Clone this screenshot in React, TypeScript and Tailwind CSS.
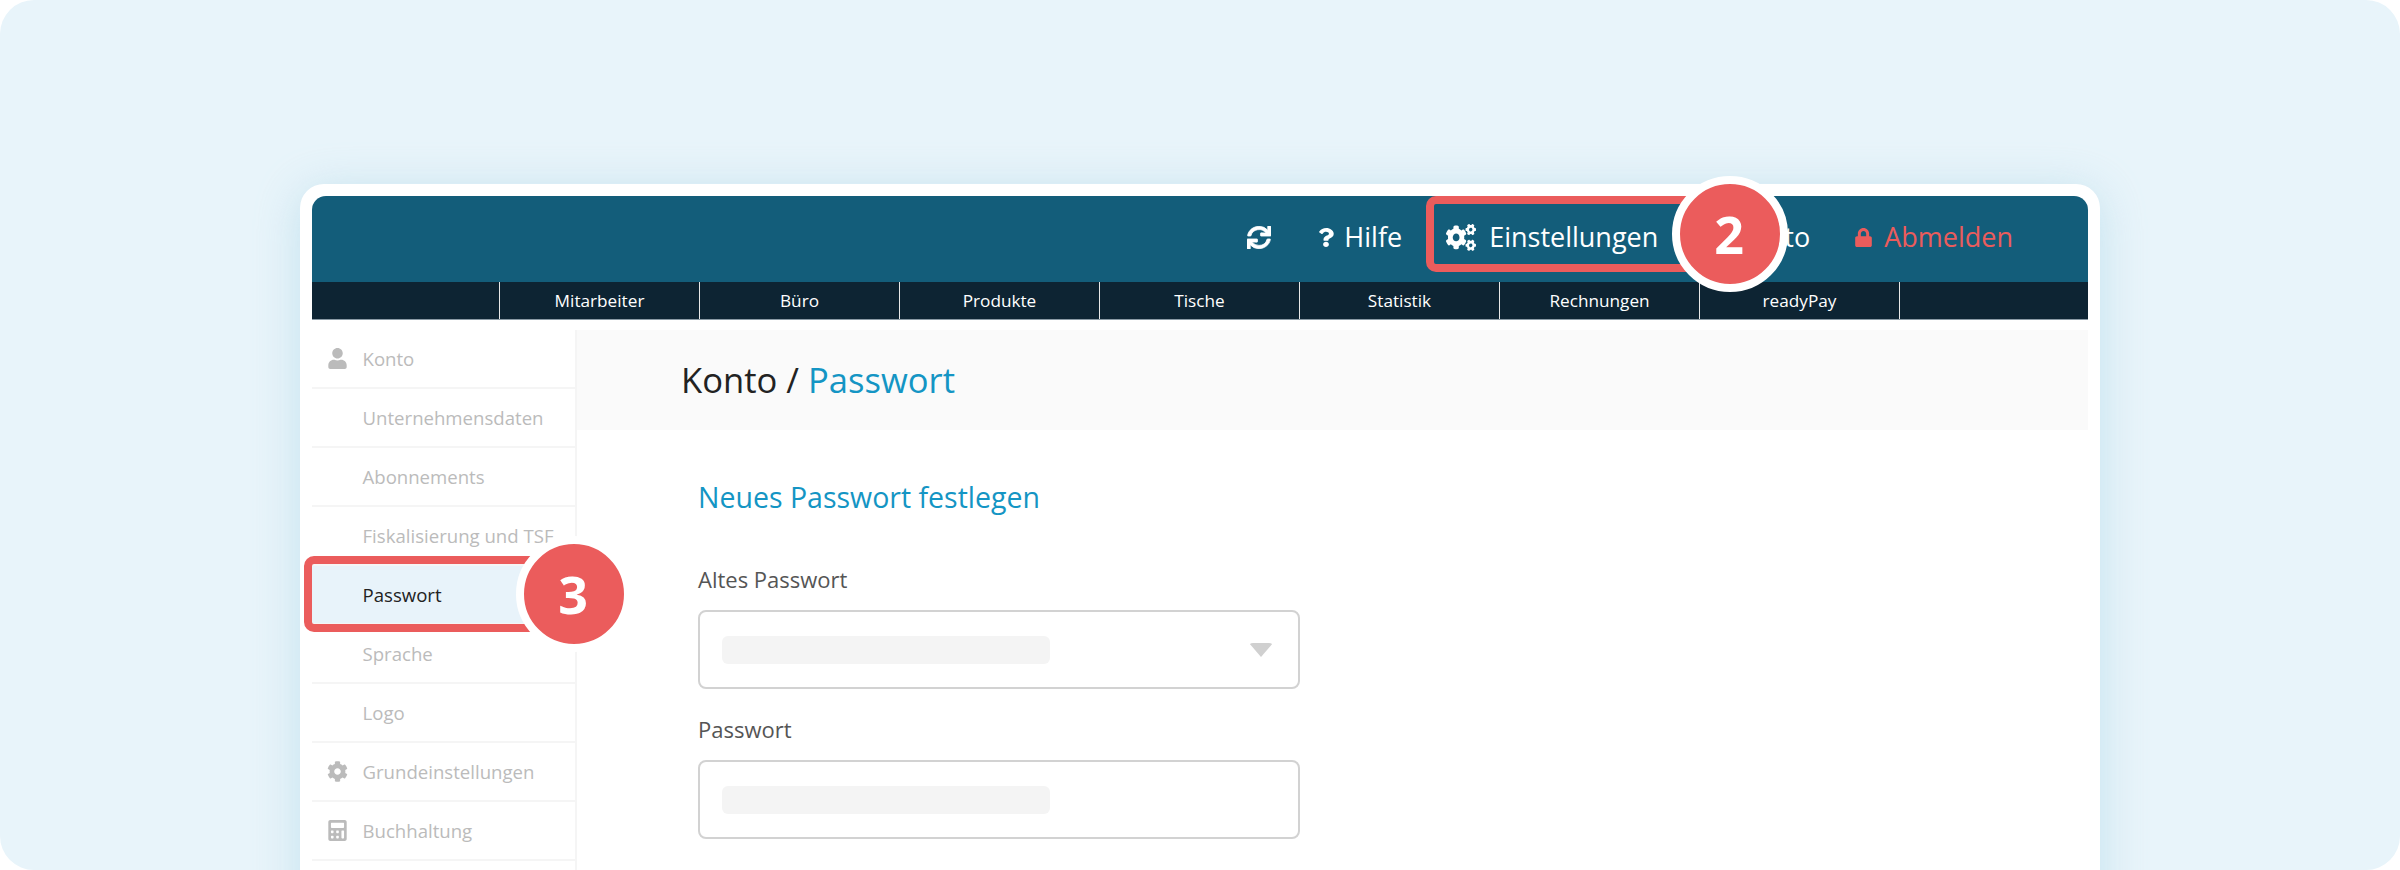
import type { ReactNode } from "react";
import { FaSync, FaQuestion, FaCogs, FaLock, FaUser, FaCog, FaCalculator } from "react-icons/fa";

const tabs = ["Mitarbeiter", "Büro", "Produkte", "Tische", "Statistik", "Rechnungen", "readyPay"];

function SideRow({ label, icon, active }: { label: string; icon?: ReactNode; active?: boolean }) {
  return (
    <div className={`h-[59px] flex items-center border-b-2 border-[#f5f5f5] ${active ? "bg-[#e8f3fa] text-[#222]" : "text-[#bbbbbb]"}`}>
      <div className="w-[50.5px] flex justify-center text-[#bbbbbb] text-[21px]">{icon}</div>
      <span className="text-[18.6px] font-medium whitespace-nowrap">{label}</span>
    </div>
  );
}

function Field({ label, select }: { label: string; select?: boolean }) {
  return (
    <div>
      <div className="text-[22px] leading-[30px] text-[#555555]">{label}</div>
      <div className="mt-[16px] h-[79px] w-[602px] border-2 border-[#d2d2d2] rounded-[8px] flex items-center justify-between pl-[22px] pr-[25px]">
        <div className="w-[328px] h-[28px] bg-[#f4f4f4] rounded-[6px]" />
        {select && <div className="w-0 h-0 border-x-[12px] border-x-transparent border-t-[14px] border-t-[#d0d0d0] rounded-sm" />}
      </div>
    </div>
  );
}

function Badge({ n, className }: { n: string; className: string }) {
  return (
    <div className={`absolute w-[116px] h-[116px] rounded-full bg-[#eb5c5c] border-[8px] border-white flex items-center justify-center pr-[2px] text-white text-[52px] font-bold ${className}`}>
      {n}
    </div>
  );
}

export default function App() {
  return (
    <div className="h-[870px] overflow-hidden bg-white font-['Open_Sans',sans-serif]">
      <div className="h-full overflow-hidden rounded-[34px] bg-[#e8f4fa] pt-[184px]">
        <div className="relative mx-auto w-[1800px] h-[760px] bg-white rounded-[24px] p-3 shadow-[0_6px_44px_rgba(150,205,225,0.45)]">
          <div className="h-[86px] rounded-t-[14px] bg-[#135d7a] flex items-center justify-end text-white text-[27px] pr-[75px] pb-[4px]">
            <FaSync className="w-[24px] h-[23px] mr-[47px]" stroke="currentColor" strokeWidth={16} preserveAspectRatio="none" />
            <FaQuestion className="w-[16px] h-[19px] mr-[10px]" preserveAspectRatio="none" />
            <span className="mr-[44px]">Hilfe</span>
            <FaCogs className="w-[30px] h-[27px] mr-[13px]" preserveAspectRatio="none" />
            <span className="mr-[126px]">Einstellungen</span>
            <span className="mr-[44px]">to</span>
            <span className="flex items-center text-[#eb5c5c]">
              <FaLock className="text-[19px] mr-[11px]" />
              Abmelden
            </span>
          </div>
          <div className="h-[38px] bg-[#0d2433] border-b border-[#8a9aa5] flex pl-[187px] text-white text-[17.2px]">
            {tabs.map((t) => (
              <div key={t} className="w-[200px] border-l border-[#e8e8e8] flex items-center justify-center">{t}</div>
            ))}
            <div className="border-l border-[#e8e8e8]" />
          </div>
          <div className="flex pt-[10px]">
            <div className="w-[265px] shrink-0 border-r-2 border-[#f5f5f5]">
              <SideRow label="Konto" icon={<FaUser />} />
              <SideRow label="Unternehmensdaten" />
              <SideRow label="Abonnements" />
              <SideRow label="Fiskalisierung und TSF" />
              <SideRow label="Passwort" active />
              <SideRow label="Sprache" />
              <SideRow label="Logo" />
              <SideRow label="Grundeinstellungen" icon={<FaCog />} />
              <SideRow label="Buchhaltung" icon={<FaCalculator />} />
              <div className="h-[59px]" />
            </div>
            <div className="flex-1">
              <div className="h-[100px] bg-[#fafafa] flex items-center pl-[104px] text-[34.6px] text-[#222]">
                Konto /&nbsp;<span className="text-[#1495c4]">Passwort</span>
              </div>
              <div className="pl-[121px]">
                <h2 className="mt-[47px] text-[28.5px] leading-[40px] text-[#1495c4]">Neues Passwort festlegen</h2>
                <div className="mt-[47px] flex flex-col gap-[25px]">
                  <Field label="Altes Passwort" select />
                  <Field label="Passwort" />
                </div>
              </div>
            </div>
          </div>
          <div className="absolute left-[1126px] top-[12px] w-[290px] h-[76px] rounded-[10px] border-[8px] border-[#eb5c5c]" />
          <Badge n="2" className="left-[1372px] top-[-8px]" />
          <div className="absolute left-[4px] top-[372px] w-[240px] h-[76px] rounded-[10px] border-[8px] border-[#eb5c5c]" />
          <Badge n="3" className="left-[216px] top-[352px]" />
        </div>
      </div>
    </div>
  );
}
